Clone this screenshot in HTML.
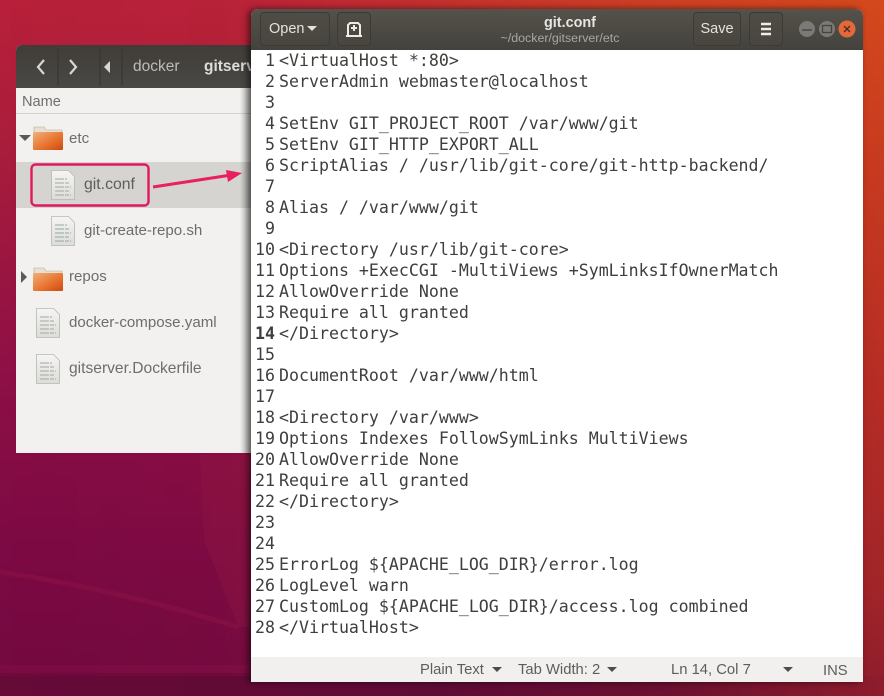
<!DOCTYPE html>
<html><head><meta charset="utf-8">
<style>
html,body{margin:0;padding:0}
body{width:884px;height:696px;overflow:hidden;position:relative;font-family:"Liberation Sans",sans-serif;
background:linear-gradient(180deg,#b8203a 0%,#ab1e3b 18%,#8c0f45 55%,#7d0a44 78%,#730a40 96%,#620a36 100%);}
.a{position:absolute}
.bgo{left:0;top:0;width:884px;height:696px;background:linear-gradient(180deg,#d4491c 0%,#c63a1f 25%,#b62d24 55%,#a12428 85%,#8e1c2c 100%);-webkit-mask-image:linear-gradient(90deg,rgba(0,0,0,0) 0%,rgba(0,0,0,.04) 25%,rgba(0,0,0,.7) 70%,#000 100%);mask-image:linear-gradient(90deg,rgba(0,0,0,0) 0%,rgba(0,0,0,.04) 25%,rgba(0,0,0,.7) 70%,#000 100%)}
.bgb{left:0;top:676px;width:884px;height:20px;background:linear-gradient(90deg,#660a38 0%,#5e0b34 50%,#6a1030 75%,#8e1c2c 100%)}
.fm{left:16px;top:45px;width:240px;height:408px;background:#f2f1f0;border-radius:6px 0 0 0;overflow:hidden}
.fmh{left:0;top:0;width:240px;height:43px;background:linear-gradient(#403d39,#4a4844)}
.t{position:absolute;white-space:nowrap;color:#6d6d6b;font-size:15.1px;line-height:18px}
.ed{left:251px;top:9px;width:612px;height:673px;background:#fff;border-radius:7px 7px 0 0;overflow:hidden;box-shadow:-3px 0 7px rgba(0,0,0,.55)}
.hd{left:0;top:0;width:612px;height:41px;background:linear-gradient(#55524b,#44423d)}
.btn{position:absolute;top:3px;height:32px;border:1px solid #3b3a36;border-radius:4px;background:linear-gradient(#4f4c46,#494640);color:#e3e2de;font-size:14.5px;line-height:33px;text-align:center;box-sizing:content-box}
.code{position:absolute;font-family:"DejaVu Sans Mono",monospace;font-size:16.6px;line-height:21px;color:#3e3e3c;white-space:pre}
.st{left:0;top:648px;width:612px;height:25px;background:#f1f0ef}
.s{position:absolute;top:4px;white-space:nowrap;font-size:14.8px;line-height:18px;color:#5d5d5b}
.tri{position:absolute;width:0;height:0;border-left:5px solid transparent;border-right:5px solid transparent;border-top:5px solid #4d4d4b}
</style></head><body>
<div class="a bgo"></div>
<div class="a bgb"></div>
<svg class="a" style="left:0;top:0" width="260" height="696">
 <path d="M0 572Q120 590 238 627" stroke="#8e1548" stroke-width="5" fill="none" opacity=".45"/>
 <path d="M200 455L204 540L238 627L250 627L250 455z" fill="#8e1640" opacity=".4"/>
 <path d="M0 669H250" stroke="#8a1048" stroke-width="8" opacity=".4"/>
</svg>

<div class="a fm">
 <div class="a fmh"></div>
 <svg class="a" style="left:0;top:0" width="240" height="43">
  <path d="M28 15l-6 7 6 7M54 15l6 7-6 7" fill="none" stroke="#d8d7d3" stroke-width="2.2"/>
  <path d="M94 16v12l-6-6z" fill="#d8d7d3"/>
  <path d="M42 3v38M84 3v38M106 3v38" stroke="#34322f" stroke-width="1"/>
 </svg>
 <div class="t" style="left:117px;top:13px;color:#bdbcb7;font-size:15.5px">docker</div>
 <div class="t" style="left:188px;top:13px;color:#dddcd8;font-size:15.5px;font-weight:bold">gitserver</div>
 <div class="a" style="left:0;top:43px;width:240px;height:25px;border-bottom:1px solid #d4d3d0"></div>
 <div class="t" style="left:6px;top:48px;font-size:14.6px;color:#6f6f6d">Name</div>
 <div class="a" style="left:0;top:117px;width:240px;height:46px;background:#d5d4d1"></div>

 <svg class="a" style="left:0;top:68px" width="240" height="340">
  <defs>
   <linearGradient id="f" x1="0" y1="0" x2="1" y2="1"><stop offset="0" stop-color="#f0b07a"/><stop offset=".6" stop-color="#e8702c"/><stop offset="1" stop-color="#c94a14"/></linearGradient>
   <linearGradient id="p" x1="0" y1="0" x2="0" y2="1"><stop offset="0" stop-color="#f5f5f3"/><stop offset="1" stop-color="#dcdcd9"/></linearGradient>
  </defs>
  <path d="M3 22h12l-6 6z" fill="#5a5a58"/>
  <path d="M18 17v-3h10l2 3h16v4H18z" fill="#e6dfd2" stroke="#b9a98f" stroke-width=".6"/>
  <rect x="17" y="19" width="30" height="18" fill="url(#f)" rx="1"/>
  <path d="M5 158v12l6-6z" fill="#5a5a58"/>
  <path d="M18 158v-3h10l2 3h16v4H18z" fill="#e6dfd2" stroke="#b9a98f" stroke-width=".6"/>
  <rect x="17" y="160" width="30" height="18" fill="url(#f)" rx="1"/>
  <g fill="url(#p)" stroke="#b6b6b3" stroke-width=".8">
   <path d="M35.500 57.500h17l6 6v23h-23z"/>
   <path d="M35.500 103.500h17l6 6v23h-23z"/>
   <path d="M20.500 195.500h17l6 6v23h-23z"/>
   <path d="M20.500 241.500h17l6 6v23h-23z"/>
  </g>
  <g stroke="#a5a5a2" stroke-width="1" stroke-dasharray="9 1 4 1">
   <path d="M39 66h12M39 70h14M39 74h16M39 78h14M39 82h16"/>
   <path d="M39 112h12M39 116h14M39 120h16M39 124h14M39 128h16" stroke="#8fa9a5"/>
   <path d="M24 204h12M24 208h14M24 212h16M24 216h14M24 220h16"/>
   <path d="M24 250h12M24 254h14M24 258h16M24 262h14M24 266h16"/>
  </g>
 </svg>

 <div class="t" style="left:53px;top:85px">etc</div>
 <div class="t" style="left:68px;top:131px;color:#5d5d5b;font-size:15.8px">git.conf</div>
 <div class="t" style="left:68px;top:177px">git-create-repo.sh</div>
 <div class="t" style="left:53px;top:223px">repos</div>
 <div class="t" style="left:53px;top:269px">docker-compose.yaml</div>
 <div class="t" style="left:53px;top:315px;font-size:15.6px">gitserver.Dockerfile</div>
 <div class="a" style="left:215px;top:43px;width:25px;height:365px;background:linear-gradient(90deg,rgba(0,0,0,0),rgba(0,0,0,.0) 35%,rgba(0,0,0,.38))"></div>
</div>

<svg class="a" style="left:0;top:0" width="260" height="220">
 <rect x="31.500" y="164.500" width="117" height="41" rx="4" fill="none" stroke="#e0185f" stroke-width="2.400"/>
 <path d="M153 187L228 175.500" stroke="#e8205f" stroke-width="3" fill="none"/>
 <path d="M242 173l-16-3 2 12z" fill="#e8205f"/>
</svg>

<div class="a ed">
 <div class="a hd"></div>
 <div class="btn" style="left:9px;width:68px"><span style="position:absolute;left:8px">Open</span><span class="tri" style="left:46px;top:13px;border-top-color:#e3e2de"></span></div>
 <div class="btn" style="left:86px;width:32px"></div>
 <svg class="a" style="left:86px;top:3px" width="34" height="34">
  <path d="M11 24V13l2-2h8l2 2v11z" fill="none" stroke="#ecebe7" stroke-width="2"/>
  <path d="M17 13v6M14 16h6M9 24h16" stroke="#ecebe7" stroke-width="2"/>
 </svg>
 <div class="a" style="left:279px;top:5px;width:80px;text-align:center;color:#e6e5e1;font-size:14.4px;font-weight:bold;line-height:17px;padding-top:1px">git.conf</div>
 <div class="a" style="left:219px;top:22px;width:180px;text-align:center;color:#a8a7a2;font-size:12.400px;line-height:15px;white-space:nowrap">~/docker/gitserver/etc</div>
 <div class="btn" style="left:442px;width:46px">Save</div>
 <div class="btn" style="left:498px;width:32px"></div>
 <svg class="a" style="left:498px;top:3px" width="34" height="34">
  <path d="M12 12h10M12 17h10M12 22h10" stroke="#eeede9" stroke-width="2.600"/>
 </svg>
 <svg class="a" style="left:540px;top:5px" width="72" height="30">
  <circle cx="16" cy="15" r="8" fill="#7b7a75"/>
  <path d="M11 16h10" stroke="#3f3e3a" stroke-width="1.300"/>
  <circle cx="36" cy="15" r="8" fill="#7b7a75"/>
  <rect x="31.500" y="11.500" width="9" height="7" fill="none" stroke="#45443f" stroke-width="1.300"/>
  <circle cx="56" cy="15" r="8.500" fill="#e5683a"/>
  <path d="M53 12l6 6M59 12l-6 6" stroke="#4a2c20" stroke-width="1.300"/>
 </svg>

 <div class="code" style="left:3px;top:41px;width:21px;text-align:right">1
2
3
4
5
6
7
8
9
10
11
12
13
<b>14</b>
15
16
17
18
19
20
21
22
23
24
25
26
27
28</div>
 <div class="code" style="left:28px;top:41px">&lt;VirtualHost *:80&gt;
ServerAdmin webmaster@localhost

SetEnv GIT_PROJECT_ROOT /var/www/git
SetEnv GIT_HTTP_EXPORT_ALL
ScriptAlias / /usr/lib/git-core/git-http-backend/

Alias / /var/www/git

&lt;Directory /usr/lib/git-core&gt;
Options +ExecCGI -MultiViews +SymLinksIfOwnerMatch
AllowOverride None
Require all granted
&lt;/Directory&gt;

DocumentRoot /var/www/html

&lt;Directory /var/www&gt;
Options Indexes FollowSymLinks MultiViews
AllowOverride None
Require all granted
&lt;/Directory&gt;


ErrorLog ${APACHE_LOG_DIR}/error.log
LogLevel warn
CustomLog ${APACHE_LOG_DIR}/access.log combined
&lt;/VirtualHost&gt;</div>

 <div class="a st">
  <div class="s" style="left:169px">Plain Text</div>
  <span class="tri" style="left:241px;top:10px"></span>
  <div class="s" style="left:267px">Tab Width: 2</div>
  <span class="tri" style="left:356px;top:10px"></span>
  <div class="s" style="left:420px">Ln 14, Col 7</div>
  <span class="tri" style="left:532px;top:10px"></span>
  <div class="s" style="left:572px;top:5px">INS</div>
 </div>
</div>
</body></html>
